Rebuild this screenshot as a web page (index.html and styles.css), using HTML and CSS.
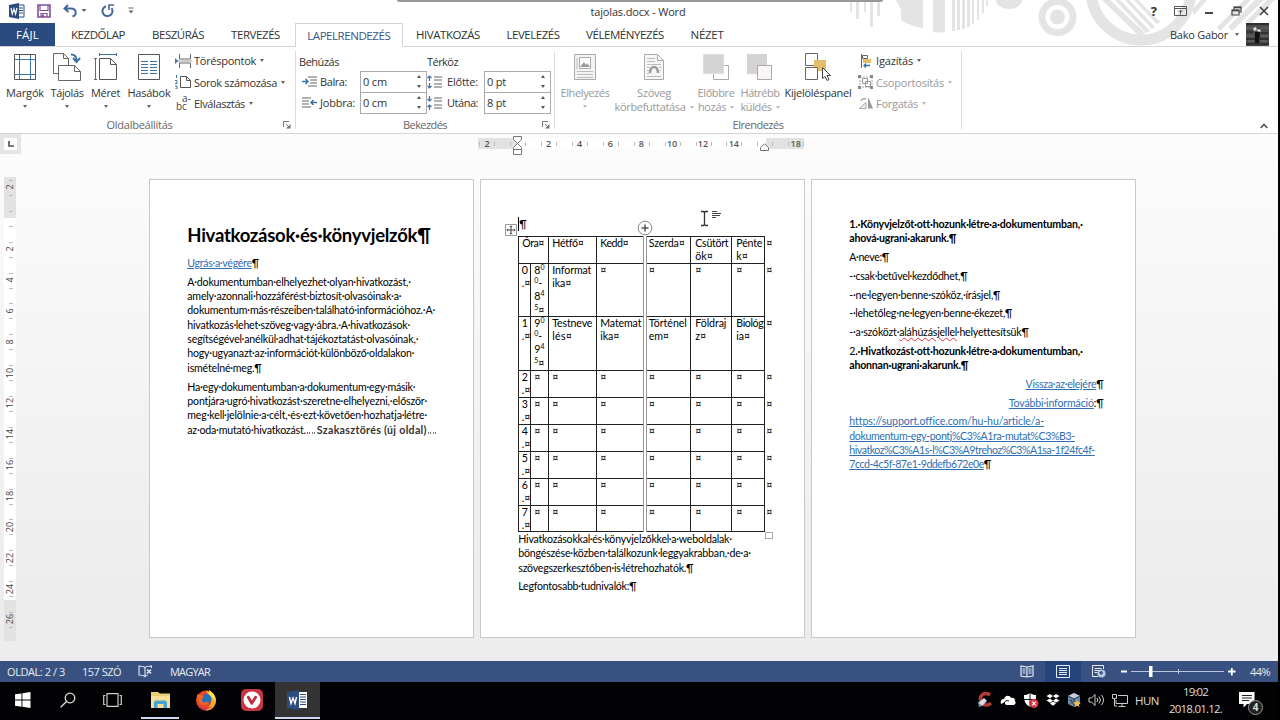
FILE: index.html
```
<!DOCTYPE html>
<html lang="hu">
<head>
    <meta charset="UTF-8">
    <meta name="viewport" content="width=device-width, initial-scale=1.0">
    <title>tajolas.docx - Word</title>
    <link rel="stylesheet" href="styles.css">
</head>
<body>
    <div class="app">
        <header class="top">
            <svg class="decor" width="438" height="46" viewBox="0 0 438 46">
                <g fill="#e4e4e4">
                    <path d="M10 2h2v10h-2zM16 2h3v17h-3zM24 2h2v10h-2zM30 2h3v25h-3zM37 2h3v14h-3z"/>
                    <path d="M56 0h5v10zM61 0h22v28q-13-2-22-8zM93 0h12v32q-6 1-12 0z"/>
                    <path d="M112 0h3v31h-3zM117 0h3v30h-3zM122 0h3v29h-3zM127 0h3v27h-3zM132 0h2v24h-2zM137 0h2v20h-2zM142 0h2v13h-2zM146 0h2v6h-2z"/>
                    <path d="M156 0h26a13 9 0 0 1-26 0z"/>
                    <circle cx="217.500" cy="17" r="7.500"/>
                    <path d="M262 0h8l35 33-6 3zM275 0h5l30 31-4 2zM285 0h4l26 27-3 2zM294 0h4l22 22-3 2z"/>
                    <path d="M377 27l27-27h7l-31 31zM388 27l27-27h9l-32 31zM406 21l21-21h8l-26 25zM352 10l9-10h6l-13 15z"/>
                </g>
                <g fill="none" stroke="#e4e4e4">
                    <circle cx="217.500" cy="17" r="15.500" stroke-width="7"/>
                    <circle cx="301" cy="-10" r="50" stroke-width="11"/>
                </g>
            </svg>
            <div class="grip"></div>
            <div class="titlebar">
                <div class="quick">
                    <svg width="16" height="16" viewBox="0 0 16 16"><path d="M9 2h6v12H9z" fill="#fff" stroke="#2b4a7d"/><path d="M10 5h4M10 7.500h4M10 10h4" stroke="#2b4a7d"/><path d="M0 2l10-2v16L0 14z" fill="#2b4a7d"/><path d="M2 5l1.300 6L5 6l1.600 5L8 5" fill="none" stroke="#fff" stroke-width="1.200"/></svg>
                    <svg width="14" height="14" viewBox="0 0 14 14"><path d="M1 1h12v12H1z" fill="none" stroke="#80509a" stroke-width="1.600"/><path d="M3 1v5.500h8V1M4 13V9.500h6V13" fill="none" stroke="#80509a" stroke-width="1.200"/><path d="M5 10.500h2V13H5z" fill="#80509a"/></svg>
                    <svg class="undo" width="24" height="14" viewBox="0 0 24 14"><path d="M5 1L1.500 4.500 5.500 8M2 4.500h6c6 0 6 7 1.500 8" fill="none" stroke="#44679c" stroke-width="2"/><path d="M18.500 5h5L21 8z" fill="#666"/></svg>
                    <svg class="redo" width="14" height="14" viewBox="0 0 14 14"><path d="M5 2.300a5 5 0 1 0 5.500 1.800" fill="none" stroke="#44679c" stroke-width="2"/><path d="M8 6V1h5" fill="none" stroke="#44679c" stroke-width="1.600"/></svg>
                    <svg class="more" width="6" height="7" viewBox="0 0 6 7"><path d="M.500 1h5" stroke="#666"/><path d="M.500 3.500h5L3 6.500z" fill="#666"/></svg>
                </div>
                <div class="doc-name"><span data-w="95">tajolas.docx - Word</span></div>
                <div class="win-buttons">
                    <b>?</b>
                    <svg width="13" height="10" viewBox="0 0 13 10"><path d="M.500.500h12v9H.500zM.500 2.500h12M6.500 8.500v-4M4.500 6l2-2 2 2" fill="none" stroke="#555"/></svg>
                    <svg width="10" height="10" viewBox="0 0 10 10"><path d="M1 7h8" stroke="#444" stroke-width="2"/></svg>
                    <svg width="11" height="10" viewBox="0 0 11 10"><path d="M1 4h7v5H1zM3 4V1h7v5H8" fill="none" stroke="#444" stroke-width="1.200"/><path d="M1 4.500h7M3 1.500h7" stroke="#444" stroke-width="1.400"/></svg>
                    <svg width="10" height="10" viewBox="0 0 10 10"><path d="M1 1l8 8M9 1L1 9" stroke="#444" stroke-width="1.700"/></svg>
                </div>
            </div>
            <nav class="tabs">
                <a class="tab file"><span data-w="23">FÁJL</span></a>
                <a class="tab"><span data-w="54">KEZDŐLAP</span></a>
                <a class="tab"><span data-w="52">BESZÚRÁS</span></a>
                <a class="tab"><span data-w="49">TERVEZÉS</span></a>
                <a class="tab active"><span data-w="83">LAPELRENDEZÉS</span></a>
                <a class="tab"><span data-w="64">HIVATKOZÁS</span></a>
                <a class="tab"><span data-w="53">LEVELEZÉS</span></a>
                <a class="tab"><span data-w="78">VÉLEMÉNYEZÉS</span></a>
                <a class="tab"><span data-w="33">NÉZET</span></a>
                <div class="user">
                    <span data-w="58">Bako Gabor</span>
                    <i class="arrow"></i>
                    <svg width="23" height="23" viewBox="0 0 23 23"><path d="M0 0h23v23H0z" fill="#4c4c4c"/><path d="M0 1h23M0 16h9M14 16h9M0 21h23M1 9h6M15 10h7" stroke="#303030" stroke-width="2"/><path d="M0 5h7M15 5h8M1 13h7M15 13h7M2 18h6M15 18h6" stroke="#696969"/><path d="M9 9h5l-1 11h-4z" fill="#111"/><path d="M7 5l3-1 1 3-3 1zM12 6l3 1-1 2-3-1z" fill="#ddd"/></svg>
                </div>
            </nav>
        </header>

        <section class="ribbon">
            <div class="group page-setup">
                <div class="group-body">
                    <div class="big">
                        <svg width="24" height="28" viewBox="0 0 24 28"><path d="M1.500 1.500h21v25h-21z" fill="#fff" stroke="#555"/><path d="M6.500 2v24M17.500 2v24M2 6.500h20M2 21.500h20" stroke="#3f73a8"/></svg>
                        <span data-w="38">Margók</span><i class="arrow"></i>
                    </div>
                    <div class="big">
                        <svg width="28" height="28" viewBox="0 0 28 28"><path d="M.500.500h10l5 5v15H.500zM10.500.500v5h5" fill="#fff" stroke="#666"/><path d="M5.500 12.500h16l6 6v9h-22zM21.500 12.500v6h6" fill="#fff" stroke="#666"/><path d="M18 1.500c4 0 5.500 2 5.500 6M20 5l3.500 4L27 5" fill="none" stroke="#3f73a8" stroke-width="2"/></svg>
                        <span data-w="33">Tájolás</span><i class="arrow"></i>
                    </div>
                    <div class="big">
                        <svg width="24" height="28" viewBox="0 0 24 28"><path d="M5.500 5.500h11l6 6v15h-17zM16.500 5.500v6h6" fill="#fff" stroke="#555"/><path d="M5 1.500h18M5.500 0v3M22.500 0v3M1.500 6v21M0 5.500h3M0 26.500h3" stroke="#3f73a8"/></svg>
                        <span data-w="29">Méret</span><i class="arrow"></i>
                    </div>
                    <div class="big">
                        <svg width="22" height="28" viewBox="0 0 22 28"><path d="M.500 1.500h21v25H.500z" fill="#fff" stroke="#555"/><path d="M3 8.500h7M12 8.500h7M3 11.500h7M12 11.500h7M3 14.500h7M12 14.500h7M3 17.500h7M12 17.500h7M3 20.500h7M12 20.500h7" stroke="#3f73a8"/></svg>
                        <span data-w="43">Hasábok</span><i class="arrow"></i>
                    </div>
                    <div class="small-list">
                        <div class="small">
                            <svg width="17" height="14" viewBox="0 0 17 14"><path d="M4.500 0v5h11V0M4.500 14V9h11v5" fill="none" stroke="#666"/><path d="M2 7h15" stroke="#999"/><path d="M0 4l3 3-3 3z" fill="#3f73a8"/></svg>
                            <span data-w="62">Töréspontok</span><i class="arrow"></i>
                        </div>
                        <div class="small">
                            <svg width="17" height="14" viewBox="0 0 17 14"><path d="M5.500 1.500h6l4 4v7h-10zM11.500 1.500v4h4" fill="#fff" stroke="#555"/><path d="M1.500 0v3M0 5.500h2v3H0M0 11h2v3H0" fill="none" stroke="#3f73a8"/></svg>
                            <span data-w="83">Sorok számozása</span><i class="arrow"></i>
                        </div>
                        <div class="small">
                            <svg class="hyphen" width="17" height="15" viewBox="0 0 17 15"><text x="1" y="14">bc<tspan x="7" y="6">a-</tspan></text></svg>
                            <span data-w="51">Elválasztás</span><i class="arrow"></i>
                        </div>
                    </div>
                </div>
                <div class="group-name"><span data-w="66">Oldalbeállítás</span></div>
                <svg class="launcher" width="8" height="8" viewBox="0 0 8 8"><path d="M.500 6V.500H6M3 3l3 3" fill="none" stroke="#777"/><path d="M7.500 3v4.500H3z" fill="#777"/></svg>
            </div>

            <div class="group paragraph">
                <div class="group-body fields">
                    <span class="head"><span data-w="40">Behúzás</span></span>
                    <span class="head"><span data-w="31">Térköz</span></span>
                    <svg width="15" height="11" viewBox="0 0 15 11"><path d="M6 1h9M8 4h7M8 7h7M6 10h9" stroke="#666" stroke-width="1.200"/><path d="M0 5.500h6M3.500 3L6 5.500 3.500 8" fill="none" stroke="#3f73a8" stroke-width="1.500"/></svg>
                    <span data-w="27">Balra:</span>
                    <div class="spin"><span data-w="24">0 cm</span><i></i></div>
                    <svg width="15" height="14" viewBox="0 0 15 14"><path d="M7 2h8M7 5h8M7 9h8M7 12h8" stroke="#666" stroke-width="1.200"/><path d="M2.500 1v5M.500 3l2-2 2 2M2.500 8v5M.500 11l2 2 2-2" fill="none" stroke="#3f73a8" stroke-width="1.200"/></svg>
                    <span data-w="31">Előtte:</span>
                    <div class="spin"><span data-w="19">0 pt</span><i></i></div>
                    <svg width="15" height="11" viewBox="0 0 15 11"><path d="M0 1h9M0 4h7M0 7h7M0 10h9" stroke="#666" stroke-width="1.200"/><path d="M15 5.500H9M11.500 3L9 5.500 11.500 8" fill="none" stroke="#3f73a8" stroke-width="1.500"/></svg>
                    <span data-w="35">Jobbra:</span>
                    <div class="spin"><span data-w="24">0 cm</span><i></i></div>
                    <svg width="15" height="14" viewBox="0 0 15 14"><path d="M7 2h8M7 5h8M7 9h8M7 12h8" stroke="#666" stroke-width="1.200"/><path d="M2.500 0v5M.500 3l2 2 2-2M2.500 14V9M.500 11l2-2 2 2" fill="none" stroke="#3f73a8" stroke-width="1.200"/></svg>
                    <span data-w="31">Utána:</span>
                    <div class="spin"><span data-w="19">8 pt</span><i></i></div>
                </div>
                <div class="group-name"><span data-w="44">Bekezdés</span></div>
                <svg class="launcher" width="8" height="8" viewBox="0 0 8 8"><path d="M.500 6V.500H6M3 3l3 3" fill="none" stroke="#777"/><path d="M7.500 3v4.500H3z" fill="#777"/></svg>
            </div>

            <div class="group arrange">
                <div class="group-body">
                    <div class="big off">
                        <svg width="22" height="28" viewBox="0 0 22 28"><path d="M.500 1.500h21v25H.500z" fill="#f3f3f3" stroke="#aaa"/><path d="M5.500 4.500h11v11h-11z" fill="#fff" stroke="#aaa"/><path d="M6 14l4-5 2 3 1-2 3 4z" fill="#999"/><path d="M3 18.500h16M3 21.500h16M3 24.500h16M3 5v11" stroke="#bbb"/></svg>
                        <span data-w="49">Elhelyezés</span><i class="arrow"></i>
                    </div>
                    <div class="big off">
                        <svg width="20" height="28" viewBox="0 0 20 28"><path d="M.500 1.500h13l6 6v19H.500zM13.500 1.500v6h6" fill="#f6f6f6" stroke="#aaa"/><path d="M3 5.500h8M3 8.500h8M3 11.500h14M3 23.500h14M3 14.500h3M3 17.500h2M3 20.500h2M15 14.500h2M16 17.500h1" stroke="#bbb"/><path d="M6 20c0-8 8-8 8 0" fill="none" stroke="#999" stroke-width="2.500"/></svg>
                        <span data-w="34">Szöveg</span><span class="second"><span data-w="71">körbefuttatása</span><i class="arrow"></i></span>
                    </div>
                    <div class="big off">
                        <svg width="26" height="28" viewBox="0 0 26 28"><path d="M10.500 12.500h15v14h-15z" fill="#fff" stroke="#aaa"/><path d="M0 1h21v20H0z" fill="#d4d4d4" stroke="#fff" stroke-width=".500"/></svg>
                        <span data-w="37">Előbbre</span><span class="second"><span data-w="28">hozás</span><i class="arrow"></i></span>
                    </div>
                    <div class="big off">
                        <svg width="26" height="28" viewBox="0 0 26 28"><path d="M0 1h20v20H0z" fill="#d4d4d4"/><path d="M10.500 12.500h14v14h-14z" fill="#f8f4f8" stroke="#aaa"/></svg>
                        <span data-w="39">Hátrébb</span><span class="second"><span data-w="31">küldés</span><i class="arrow"></i></span>
                    </div>
                    <div class="big">
                        <svg width="26" height="28" viewBox="0 0 26 28"><path d="M.500.500h12v12H.500z" fill="#fff" stroke="#666"/><path d="M9 7h12v11H9z" fill="#e3bd67"/><path d="M.500 14.500h12v12H.500z" fill="#fff" stroke="#666"/><path d="M17.500 14.500v11l2.500-2 2 4 2-1-2-4h3.500z" fill="#fff" stroke="#444"/></svg>
                        <span data-w="67">Kijelöléspanel</span>
                    </div>
                    <div class="small-list">
                        <div class="small">
                            <svg width="16" height="14" viewBox="0 0 16 14"><path d="M3.500 0v14" stroke="#666"/><path d="M4.500 1.500h5v3h-5z" fill="#fff" stroke="#666"/><path d="M5 5h8v4H5z" fill="#e3bd67"/><path d="M12 11.500H6M8 9.500l-2 2 2 2" fill="none" stroke="#3f73a8" stroke-width="1.300"/></svg>
                            <span data-w="37">Igazítás</span><i class="arrow"></i>
                        </div>
                        <div class="small off">
                            <svg width="16" height="14" viewBox="0 0 16 14"><path d="M2 2h12v10H2z" fill="none" stroke="#aaa" stroke-dasharray="2 1"/><path d="M4.500 3.500h5v5h-5zM7.500 6.500h5v5h-5z" fill="none" stroke="#999"/><path d="M0 0h3v3H0zM12 0h3v3h-3zM0 11h3v3H0zM12 11h3v3h-3z" fill="#888"/></svg>
                            <span data-w="68">Csoportosítás</span><i class="arrow"></i>
                        </div>
                        <div class="small off">
                            <svg width="16" height="12" viewBox="0 0 16 12"><path d="M1 11.500l7-6v6z" fill="#eee" stroke="#aaa"/><path d="M10 0l5 11.500h-5z" fill="#999"/><path d="M3 4c1-2 3-3 5-2" fill="none" stroke="#aaa" stroke-width="1.500"/></svg>
                            <span data-w="42">Forgatás</span><i class="arrow"></i>
                        </div>
                    </div>
                </div>
                <div class="group-name"><span data-w="51">Elrendezés</span></div>
            </div>
            <svg class="collapse" width="8" height="6" viewBox="0 0 8 6"><path d="M.700 5L4 1.500 7.300 5" fill="none" stroke="#555" stroke-width="1.700"/></svg>
        </section>

        <main class="workspace">
            <div class="ruler-row">
                <div class="tab-stop"><svg width="13" height="12" viewBox="0 0 13 12"><path d="M0 0h13v12H0z" fill="#fff"/><path d="M5 3v5h5" fill="none" stroke="#555" stroke-width="1.700"/></svg></div>
                <div class="ruler">
                    <span>2</span><span></span><span>2</span><span>4</span><span>6</span><span>8</span><span>10</span><span>12</span><span>14</span><span></span><span>18</span>
                    <svg class="indent" width="9" height="19" viewBox="0 0 9 19"><path d="M.500.500h8v3l-4 4 4 4v2h-8v-2l4-4-4-4zM.500 13.500h8v5h-8z" fill="#fff" stroke="#777"/></svg>
                    <svg class="indent right" width="9" height="8" viewBox="0 0 9 8"><path d="M4.500.700l4 4v2.800h-8V4.700z" fill="#fff" stroke="#777"/></svg>
                </div>
            </div>
            <div class="canvas">
                <div class="v-ruler">
                    <span><b>2</b></span><span></span><span><b>2</b></span><span><b>4</b></span><span><b>6</b></span><span><b>8</b></span><span><b>10</b></span><span><b>12</b></span><span><b>14</b></span><span><b>16</b></span><span><b>18</b></span><span><b>20</b></span><span><b>22</b></span><span><b>24</b></span><span><b>26</b></span>
                </div>
                <div class="pages">
                    <article class="page">
                        <h1><span data-w="243.3">Hivatkozások·és·könyvjelzők¶</span></h1>
                        <p><span data-w="71.5"><a>Ugrás·a·végére</a>¶</span></p>
                        <p>
                            <span data-w="223.5">A·dokumentumban·elhelyezhet·olyan·hivatkozást,·</span>
                            <span data-w="214">amely·azonnali·hozzáférést·biztosít·olvasóinak·a·</span>
                            <span data-w="247.7">dokumentum·más·részeiben·található·információhoz.·A·</span>
                            <span data-w="222.7">hivatkozás·lehet·szöveg·vagy·ábra.·A·hivatkozások·</span>
                            <span data-w="231">segítségével·anélkül·adhat·tájékoztatást·olvasóinak,·</span>
                            <span data-w="227">hogy·ugyanazt·az·információt·különböző·oldalakon·</span>
                            <span data-w="74.3">ismételné·meg.¶</span>
                        </p>
                        <p>
                            <span data-w="228">Ha·egy·dokumentumban·a·dokumentum·egy·másik·</span>
                            <span data-w="239.7">pontjára·ugró·hivatkozást·szeretne·elhelyezni,·először·</span>
                            <span data-w="239.7">meg·kell·jelölnie·a·célt,·és·ezt·követően·hozhatja·létre·</span>
                            <span class="break"><span data-w="118.5">az·oda·mutató·hivatkozást.</span><i></i><span class="section" data-w="110">Szakasztörés (új oldal)</span><i></i></span>
                        </p>
                    </article>

                    <article class="page second-page">
                        <p class="empty"><span>¶</span></p>
                        <div class="table-wrap">
                            <div class="grid">
                                <div class="wide"><span data-w="21.5">Óra¤</span></div><div><span data-w="31">Hétfő¤</span></div><div><span data-w="28">Kedd¤</span></div><div><span data-w="36">Szerda¤</span></div><div><span data-w="33">Csütört</span><br>ök¤</div><div><span data-w="26">Pénte</span><br>k¤</div><div class="end">¤</div>
                                <div>0<br>.¤</div><div>8<sup>0</sup><br><sup>0</sup>-<br>8<sup>4</sup><br><sup>5</sup>¤</div><div><span data-w="39">Informat</span><br><span data-w="19">ika¤</span></div><div>¤</div><div>¤</div><div>¤</div><div>¤</div><div class="end">¤</div>
                                <div>1<br>.¤</div><div>9<sup>0</sup><br><sup>0</sup>-<br>9<sup>4</sup><br><sup>5</sup>¤</div><div><span data-w="40">Testneve</span><br><span data-w="20">lés¤</span></div><div><span data-w="41">Matemat</span><br><span data-w="19">ika¤</span></div><div><span data-w="38">Történel</span><br><span data-w="20">em¤</span></div><div><span data-w="31">Földraj</span><br>z¤</div><div><span data-w="27">Biológ</span><br>ia¤</div><div class="end">¤</div>
                                <div>2<br>.¤</div><div>¤</div><div>¤</div><div>¤</div><div>¤</div><div>¤</div><div>¤</div><div class="end">¤</div>
                                <div>3<br>.¤</div><div>¤</div><div>¤</div><div>¤</div><div>¤</div><div>¤</div><div>¤</div><div class="end">¤</div>
                                <div>4<br>.¤</div><div>¤</div><div>¤</div><div>¤</div><div>¤</div><div>¤</div><div>¤</div><div class="end">¤</div>
                                <div>5<br>.¤</div><div>¤</div><div>¤</div><div>¤</div><div>¤</div><div>¤</div><div>¤</div><div class="end">¤</div>
                                <div>6<br>.¤</div><div>¤</div><div>¤</div><div>¤</div><div>¤</div><div>¤</div><div>¤</div><div class="end">¤</div>
                                <div>7<br>.¤</div><div>¤</div><div>¤</div><div>¤</div><div>¤</div><div>¤</div><div>¤</div><div class="end">¤</div>
                            </div>
                            <div class="insert-line"></div>
                            <svg class="insert-plus" width="16" height="16" viewBox="0 0 16 16"><circle cx="8" cy="8" r="6.800" fill="#fff" stroke="#888"/><path d="M8 4.500v7M4.500 8h7" stroke="#555" stroke-width="1.500"/></svg>
                            <svg class="move" width="12" height="12" viewBox="0 0 12 12"><path d="M.500.500h11v11H.500z" fill="#fff" stroke="#999"/><path d="M6 2v8M2 6h8M4.800 3L6 1.800 7.200 3M4.800 9L6 10.200 7.200 9M3 4.800L1.800 6 3 7.200M9 4.800L10.200 6 9 7.200" fill="none" stroke="#444"/></svg>
                            <div class="resize"></div>
                        </div>
                        <p>
                            <span data-w="213.5">Hivatkozásokkal·és·könyvjelzőkkel·a·weboldalak·</span>
                            <span data-w="232.5">böngészése·közben·találkozunk·leggyakrabban,·de·a·</span>
                            <span data-w="175">szövegszerkesztőben·is·létrehozhatók.¶</span>
                        </p>
                        <p><span data-w="118">Legfontosabb·tudnivalók:¶</span></p>
                        <svg class="cursor" width="20" height="18" viewBox="0 0 20 18"><path d="M1 1.500h2.500l1 1 1-1H8M4.500 2v13M1 15.500h2.500l1-1 1 1H8" fill="none" stroke="#333" stroke-width="1.300"/><path d="M12 1.500h5M12 3.500h9M12 5.500h8M12 7.500h4" stroke="#444" stroke-width="1.200"/></svg>
                    </article>

                    <article class="page third-page">
                        <p class="strong">
                            <span data-w="233">1.·Könyvjelzőt·ott·hozunk·létre·a·dokumentumban,·</span>
                            <span data-w="107">ahová·ugrani·akarunk.¶</span>
                        </p>
                        <p><span data-w="39.5">A·neve:¶</span></p>
                        <p><span data-w="118">-·csak·betűvel·kezdődhet,¶</span></p>
                        <p><span data-w="151">-·ne·legyen·benne·szóköz,·írásjel,¶</span></p>
                        <p><span data-w="163">-·lehetőleg·ne·legyen·benne·ékezet,¶</span></p>
                        <p><span data-w="179">-·a·szóközt·<u>aláhúzásjellel</u>·helyettesítsük¶</span></p>
                        <p class="strong">
                            <span data-w="233"><em>2</em>.·Hivatkozást·ott·hozunk·létre·a·dokumentumban,·</span>
                            <span data-w="119">ahonnan·ugrani·akarunk.¶</span>
                        </p>
                        <p class="right"><span data-w="78"><a>Vissza·az·elejére</a>¶</span></p>
                        <p class="right"><span data-w="94.7"><a>További·információ</a>:¶</span></p>
                        <p>
                            <span data-w="194"><a>https://support.office.com/hu-hu/article/a-</a></span>
                            <span data-w="225.5"><a>dokumentum-egy-pontj%C3%A1ra-mutat%C3%B3-</a></span>
                            <span data-w="245.5"><a>hivatkoz%C3%A1s-l%C3%A9trehoz%C3%A1sa-1f24fc4f-</a></span>
                            <span data-w="141.5"><a>7ccd-4c5f-87e1-9ddefb672e0e</a>¶</span>
                        </p>
                    </article>
                </div>
            </div>
        </main>

        <footer class="status">
            <span data-w="58">OLDAL: 2 / 3</span>
            <span data-w="39">157 SZÓ</span>
            <svg width="15" height="13" viewBox="0 0 15 13"><path d="M7 2.500C5 1 3 1 1 1v9c2 0 4 0 6 1.500zM7 2.500C8 1.500 10 1 13.500 1v2M7 11.500c1-1 2-1.500 3-1.500" fill="none" stroke="#e6ecf5" stroke-width="1.100"/><path d="M9 4.500l4 4M13 4.500l-4 4" stroke="#e6ecf5" stroke-width="1.500"/></svg>
            <span data-w="40">MAGYAR</span>
            <div class="views">
                <div class="view"><svg width="14" height="13" viewBox="0 0 14 13"><path d="M7 2L1 1v10l6 1 6-1V1zM7 2v10" fill="none" stroke="#e6ecf5" stroke-width="1.200"/><path d="M2.500 4h3M2.500 6h3M2.500 8h3M8.500 4h3M8.500 6h3M8.500 8h3" stroke="#e6ecf5"/></svg></div>
                <div class="view on"><svg width="14" height="13" viewBox="0 0 14 13"><path d="M.500.500h13v12H.500zM3 3.500h8M3 5.500h8M3 7.500h8M3 9.500h8" fill="none" stroke="#e6ecf5"/></svg></div>
                <div class="view"><svg width="14" height="13" viewBox="0 0 14 13"><path d="M6 11.500H.500V.500h11V4M2.500 3.500h7M2.500 5.500h5M2.500 7.500h3" fill="none" stroke="#e6ecf5"/><circle cx="9.500" cy="8.500" r="4" fill="#b9c7de"/><path d="M7 7l3-1 1 2-2 2z" fill="#385180"/></svg></div>
            </div>
            <svg class="zoom" width="116" height="13" viewBox="0 0 116 13"><path d="M1 6.500h6M108 6.500h7.500M111.800 3v7.500" stroke="#fff" stroke-width="1.800"/><path d="M11 6.500h93M58.500 4v5" stroke="#b9c7de"/><path d="M29 1h3.500v11H29z" fill="#fff"/></svg>
            <span class="pct" data-w="20">44%</span>
        </footer>

        <div class="taskbar">
            <div class="task"><svg width="16" height="16" viewBox="0 0 16 16"><path d="M0 2.300l6.500-.900v6.200H0zM7.400 1.200L15.500 0v7.600H7.400zM0 8.500h6.500v6.200L0 13.800zM7.400 8.500h8.100V16l-8.100-1.200z" fill="#fff"/></svg></div>
            <div class="task"><svg width="16" height="16" viewBox="0 0 16 16"><circle cx="10" cy="6" r="4.800" fill="none" stroke="#ddd" stroke-width="1.300"/><path d="M6.500 9.500L.700 15.300" stroke="#ddd" stroke-width="1.300"/></svg></div>
            <div class="task"><svg width="19" height="14" viewBox="0 0 19 14"><path d="M4 .700h11v12.600H4zM2.500 2.500H.700v9h1.800M16.500 2.500h1.800v9h-1.800" fill="none" stroke="#ccc" stroke-width="1.200"/></svg></div>
            <div class="task open"><svg width="21" height="18" viewBox="0 0 21 18"><path d="M1 1h7l2 1.500h10V17H1z" fill="#e9cf75"/><path d="M1 5h19v12H1z" fill="#f6e196"/><path d="M4 17v-6l1.500-1.500h10L17 11v6h-3.500v-4h-6v4z" fill="#47a5cf"/></svg></div>
            <div class="task"><svg width="22" height="22" viewBox="0 0 22 22"><circle cx="11" cy="11.500" r="10" fill="#e9472a"/><path d="M11 1.500c6 1 10 5 10 10s-4 10-10 10c-2-2 4-3 5-8S12 6 11 1.500z" fill="#f7a928"/><path d="M14 1c5 3 7 7 6 12-1-3-3-5-6-6z" fill="#fde04a"/><circle cx="11.500" cy="10" r="5" fill="#2372b8"/><path d="M2 5c1 1 3 1 4 1 2 0 3 1 2 3-2 1-2 3 0 4 2 1 4 0 6-1-1 4-5 5-8 3-3-2-4-6-4-10z" fill="#f0642a"/><path d="M3 16c4 4 9 4 14 1-3 4-10 6-14-1z" fill="#c42d66"/></svg></div>
            <div class="task"><svg width="22" height="22" viewBox="0 0 22 22"><rect width="22" height="22" rx="5" fill="#ca3447"/><circle cx="11" cy="11" r="8.500" fill="#fff"/><path d="M7.300 8.200l3.500 6 3.800-6" fill="none" stroke="#c02b40" stroke-width="2.800" stroke-linecap="round" stroke-linejoin="round"/></svg></div>
            <div class="task open current"><svg width="21" height="20" viewBox="0 0 21 20"><path d="M10 2h10v16H10z" fill="#fff"/><path d="M13 4.500h6M13 7h6M13 9.500h6M13 12h6M13 14.500h6" stroke="#2b4a7d"/><path d="M0 2l12-2v20L0 18z" fill="#2b4a7d"/><path d="M2.500 7l1.500 6.500L6 8l2 5.500L9.500 7" fill="none" stroke="#fff" stroke-width="1.400"/></svg></div>
            <div class="tray">
                <svg width="16" height="16" viewBox="0 0 16 16"><path d="M13 3C7-1 2 4 4 9c2 5 7 5 10 2" fill="none" stroke="#b33a30" stroke-width="3.500"/><path d="M1 11l6-5 3 3-5 5z" fill="#d5dce2"/><path d="M1 10l4 4-3 1z" fill="#6a93b8"/></svg>
                <svg width="16" height="12" viewBox="0 0 16 12"><path d="M1 10c-1-4 1-5 3-5 1-4 6-4 7-1 3-1 4 1 4 3 1 1 1 3-1 4H6c-2-1-1-4 1-4" fill="#fff"/><path d="M5 11c-2-4 2-5 4-4" fill="none" stroke="#000"/></svg>
                <svg width="16" height="15" viewBox="0 0 16 15"><path d="M7 0c2 1.500 4 2 6 2 0 6-1 9-6 12C2 11 1 8 1 2c2 0 4-.500 6-2z" fill="#fff"/><path d="M7 0v14M1 6.500h12" stroke="#111"/><circle cx="11" cy="10.500" r="4.500" fill="#d8353f"/><path d="M9.200 8.700l3.600 3.600M12.800 8.700l-3.600 3.600" stroke="#fff" stroke-width="1.200"/></svg>
                <svg width="14" height="12" viewBox="0 0 14 12"><path d="M4 0l3 2-3 2.200L.500 2zM10 0l3.500 2L10 4.200 7 2zM4 4.500L7 6.700 4 8.700.500 6.500zM10 4.500l3.500 2L10 8.700 7 6.700zM7 7.500l3 2-3 2.200-3-2.200z" fill="#fff"/></svg>
                <svg width="14" height="15" viewBox="0 0 14 15"><path d="M7 0l6 3v8l-6 3-6-3V3z" fill="#6b87a8"/><path d="M7 0l6 3-6 3-6-3z" fill="#c3cdd9"/><path d="M7 6v8M1 3l6 3 6-3M3 7l2 1v3" fill="none" stroke="#1d3550"/><path d="M10 7l1.200 2.300 2.600.300-2 1.800.600 2.600-2.400-1.300L7.600 14l.600-2.600-2-1.800 2.600-.300z" fill="#f3c43b"/></svg>
                <svg width="17" height="14" viewBox="0 0 17 14"><path d="M1 5h2.500L7 1.500v11L3.500 9H1z" fill="none" stroke="#ccc"/><path d="M9 5q1.500 2 0 4M11 3.500q3 3.500 0 7M13.500 2q4 5 0 10" fill="none" stroke="#ccc"/></svg>
                <svg width="16" height="13" viewBox="0 0 16 13"><path d="M6 1.500h9.500v8H4V6M10 9.500V12M6.500 12.500h7M.500.500h4v4h-4zM2.500 5v7H5" fill="none" stroke="#ccc"/></svg>
                <span class="lang"><span data-w="24">HUN</span></span>
                <div class="clock"><span data-w="25">19:02</span><span data-w="53">2018.01.12.</span></div>
                <div class="notes">
                    <svg width="16" height="16" viewBox="0 0 16 16"><path d="M0 0h15.500v12H8l-3.500 3.500V12H0z" fill="#fff"/><path d="M3 3.500h10M3 6h10M3 8.500h7" stroke="#222"/></svg>
                    <b>4</b>
                </div>
            </div>
        </div>
    </div>
    <script src="fit.js"></script>
</body>
</html>
```
FILE: styles.css
```
* {
    box-sizing: border-box;
}

body {
    margin: 0;
    background-color: #000;
    font-family: "Open Sans", "Noto Sans", sans-serif;
    font-size: 11px;
    color: #333;
}

.app {
    display: flex;
    flex-direction: column;
    width: 1278px;
    height: 720px;
    overflow: hidden;
    background-color: #fff;
}

svg {
    display: block;
    flex: none;
}

[data-w] {
    display: inline-block;
    white-space: nowrap;
}

/* title bar and tabs */
.top {
    position: relative;
    height: 47px;
    flex: none;
}

.decor {
    position: absolute;
    right: 0;
    top: 0;
}

.grip {
    position: absolute;
    left: 397px;
    top: 0;
    width: 486px;
    height: 2px;
    background-color: #999;
    border-radius: 0 0 6px 6px;
}

.titlebar {
    position: relative;
    display: grid;
    grid-template-columns: 400px 476px 402px;
    height: 23px;
}

.quick {
    display: flex;
    align-items: center;
    height: 21px;
    padding-left: 9px;
    gap: 12px;
}

.redo {
    margin-left: 2px;
}

.more {
    margin-left: 1px;
}

.doc-name {
    text-align: center;
    line-height: 24px;
}

.win-buttons {
    display: flex;
    justify-content: flex-end;
    align-items: center;
    height: 21px;
    gap: 17px;
    padding-right: 9px;
    font-size: 13px;
}

.tabs {
    position: relative;
    display: grid;
    grid-template-columns: 57.5px 81px 79px 76px 109px 91px 79px 105px 59px 1fr;
    height: 24px;
    border-bottom: 1px solid #d5d5d5;
}

.tab {
    display: flex;
    justify-content: center;
    align-items: center;
    height: 23px;
    font-size: 11.5px;
}

.file {
    width: 55px;
    background-color: #2a4b80;
    color: #fff;
}

.active {
    height: 24px;
    margin: 0 0 0 1.5px;
    border: 1px solid #d5d5d5;
    border-bottom: none;
    background-color: #fff;
    color: #3a5589;
}

.user {
    display: flex;
    justify-content: flex-end;
    align-items: center;
    height: 23px;
    gap: 7px;
    padding-right: 9px;
}

.arrow {
    display: inline-block;
    flex: none;
    border: 2.5px solid transparent;
    border-top: 3px solid #666;
    border-bottom: none;
}

/* ribbon */
.ribbon {
    position: relative;
    display: flex;
    flex: none;
    height: 87px;
    padding-top: 4px;
    border-bottom: 1px solid #d5d5d5;
}

.group {
    position: relative;
    height: 78px;
    border-right: 1px solid #dcdcdc;
}

.page-setup {
    width: 296px;
}

.paragraph {
    width: 259px;
}

.arrange {
    width: 407px;
}

.group-body {
    display: flex;
    height: 66px;
}

.page-setup .group-body {
    padding-left: 4px;
}

.big {
    display: flex;
    flex-direction: column;
    align-items: center;
    width: 42px;
    padding-top: 2px;
    line-height: 14px;
}

.big svg {
    margin-bottom: 5px;
}

.big > .arrow {
    margin-top: 5px;
}

.big:nth-child(3) {
    width: 35px;
}

.big:nth-child(4) {
    width: 52px;
}

.arrange .big {
    width: 60px;
}

.arrange .big:nth-child(2) {
    width: 78px;
}

.arrange .big:nth-child(3) {
    width: 46px;
}

.arrange .big:nth-child(4) {
    width: 42px;
}

.arrange .big:nth-child(5) {
    width: 74px;
}

.second {
    display: flex;
    align-items: center;
    gap: 4px;
}

.off {
    color: #999;
}

.off .arrow {
    border-top-color: #bbb;
}

.small-list {
    margin-top: -1px;
}

.arrange .small-list {
    padding-left: 3px;
}

.small {
    display: flex;
    align-items: center;
    height: 21.4px;
}

.small svg {
    margin-right: 2px;
}

.small .arrow {
    margin-left: 4px;
}

.hyphen {
    overflow: visible;
    font-size: 10px;
    fill: #444;
}

.group-name {
    height: 14px;
    line-height: 16px;
    text-align: center;
    color: #666;
}

.page-setup .group-name {
    padding-right: 16px;
}

.launcher {
    position: absolute;
    right: 4px;
    bottom: 0;
}

.fields {
    display: grid;
    grid-template-columns: 18px 40px 67px 20px 37px 67px;
    grid-template-rows: 20px 21px 21px;
    align-items: center;
    justify-items: start;
    padding-left: 6px;
}

.head:first-child {
    grid-column: 1 / 4;
    margin-left: -3px;
}

.head {
    grid-column: 4 / 7;
    margin-left: 0;
}

.fields .spin {
    justify-self: stretch;
}

.spin {
    display: flex;
    justify-content: space-between;
    align-items: center;
    height: 22px;
    padding: 0 4px 0 2px;
    border: 1px solid #ababab;
}

.spin i {
    width: 5px;
    height: 13px;
}

.spin i::before,
.spin i::after {
    content: "";
    display: block;
    width: 0;
    margin-bottom: 7px;
    border: 2.5px solid transparent;
    border-top: none;
    border-bottom: 3px solid #555;
}

.spin i::after {
    border-bottom: none;
    border-top: 3px solid #555;
}

.collapse {
    position: absolute;
    right: 10px;
    bottom: 4px;
}

/* workspace */
.workspace {
    flex: 1;
    background: linear-gradient(#fcfcfc, #ededed 85%);
}

.ruler-row {
    display: flex;
    height: 43px;
}

.tab-stop {
    width: 21px;
    height: 20px;
    padding: 4px;
    background-color: #e5e5e5;
}

.ruler {
    position: relative;
    display: flex;
    width: 326px;
    height: 11px;
    margin: 4px 0 0 457px;
    line-height: 11px;
    font-size: 9px;
    font-weight: 600;
    color: #555;
    background: linear-gradient(to right, #e2e2e2 39px, #fff 39px, #fff 288px, #e2e2e2 288px);
}

.ruler span {
    width: 30.87px;
    flex: none;
    text-align: center;
    background: linear-gradient(#bbb, #bbb) 8px 4px / 1px 4px no-repeat, linear-gradient(#bbb, #bbb) 23px 4px / 1px 4px no-repeat;
}

.ruler span:first-child {
    width: 24.4px;
    padding-right: 6.4px;
    background-position: 1px 4px, 16px 4px;
}

.ruler span:nth-child(11) {
    width: 23.7px;
    padding-left: 7.4px;
}

.indent {
    position: absolute;
    left: 35px;
    top: -2px;
}

.indent.right {
    left: 282px;
    top: 5px;
}

.canvas {
    display: flex;
    padding-left: 4px;
}

.v-ruler {
    width: 12px;
    height: 464px;
    overflow: hidden;
    line-height: 12px;
    font-size: 9px;
    color: #444;
    background: linear-gradient(#e2e2e2 41px, #fff 41px, #fff 423px, #e2e2e2 423px);
}

.v-ruler span {
    display: flex;
    justify-content: center;
    align-items: center;
    height: 30.87px;
    background: linear-gradient(#bbb, #bbb) 5px 8px / 4px 1px no-repeat, linear-gradient(#bbb, #bbb) 5px 23px / 4px 1px no-repeat;
}

.v-ruler span:first-child {
    height: 25.8px;
    padding-bottom: 5px;
    background-position: 5px 3px, 5px 18px;
}

.v-ruler b {
    font-weight: 500;
    transform: rotate(-90deg);
}

.pages {
    display: flex;
    gap: 6px;
    padding: 2px 0 0 133px;
}

.page {
    position: relative;
    width: 325px;
    height: 459px;
    padding: 43px 0 0 37.3px;
    border: 1px solid #c8c8c8;
    background-color: #fff;
    font-family: Lato, "Open Sans", sans-serif;
    font-size: 10.6px;
    line-height: 14.35px;
    color: #000;
}

.page h1 {
    margin: 0 0 9px;
    font-size: 18.5px;
    line-height: 24px;
}

.page p {
    margin: 0 0 4.4px;
}

.page p > span {
    display: block;
    width: max-content;
}

.page a {
    color: #2f6eb0;
    text-decoration: underline;
}

.page .break {
    display: flex;
    align-items: center;
    gap: 1px;
}

.break i {
    width: 9px;
    height: 2px;
    margin-top: 6px;
    background: repeating-linear-gradient(to right, #777 0 1px, transparent 1px 2.3px);
}

.section {
    font-weight: bold;
    color: #333;
}

.page .empty {
    margin: 0;
    height: 19px;
}

.empty span {
    border-left: 1px solid #000;
}

.second-page {
    padding-top: 37px;
}

.table-wrap {
    position: relative;
    width: 258px;
}

.grid {
    display: grid;
    grid-template-columns: 12px 18px 48px 49px 45px 41px 33px 11px;
    grid-template-rows: 28px 53px 54px 27px 27px 27px 27px 27px 26px;
    border-left: 1px solid #222;
    line-height: 13.2px;
}

.grid div {
    padding-left: 3px;
    border-right: 1px solid #222;
    border-bottom: 1px solid #222;
    white-space: nowrap;
    overflow: hidden;
}

.grid div:nth-child(-n+7) {
    padding-top: 1px;
}

.grid div:nth-child(-n+6) {
    box-shadow: inset 0 1px #222;
}

.grid .wide {
    grid-column: 1 / 3;
}

/* the wide header cell shifts the count by one */
.grid div:nth-child(8n+5),
.grid div:nth-child(8n+6) {
    padding-left: 4px;
}

.grid div:nth-child(8n+4),
.grid div:nth-child(8n) {
    padding-left: 2.5px;
}

.grid .end {
    padding-left: 1px;
    border: none;
}

.grid sup {
    font-size: 7px;
    line-height: 0;
    vertical-align: 4px;
}

.insert-line {
    position: absolute;
    left: 125px;
    top: 0;
    width: 4px;
    height: 296px;
    border: 1px solid #999;
    border-width: 0 1px;
    background-color: #fff;
}

.insert-plus {
    position: absolute;
    left: 119px;
    top: -16px;
}

.move {
    position: absolute;
    left: -13px;
    top: -12px;
}

.resize {
    position: absolute;
    left: 247px;
    top: 296px;
    width: 8px;
    height: 7px;
    border: 1px solid #aaa;
    background-color: #fff;
}

.cursor {
    position: absolute;
    left: 219px;
    top: 30px;
    overflow: visible;
}

.third-page {
    padding-top: 37px;
}

.strong {
    font-weight: bold;
}

.strong em {
    font-style: normal;
    font-weight: normal;
}

.page u {
    text-decoration: underline wavy #d33 1px;
    text-underline-offset: 1px;
}

.page .right span {
    margin-left: auto;
    margin-right: 31.5px;
}

/* status bar */
.status {
    display: flex;
    align-items: center;
    flex: none;
    height: 21px;
    padding: 0 8px 0 7px;
    background-color: #385180;
    color: #e6ecf5;
}

.status > span,
.status > svg {
    margin-right: 17px;
}

.views {
    display: flex;
    height: 21px;
    margin-left: auto;
}

.view {
    display: flex;
    justify-content: center;
    align-items: center;
    width: 36px;
}

.view.on {
    background-color: #24457c;
}

.status > .zoom {
    margin: 0 14px 0 3px;
}

.status > .pct {
    margin-right: 0;
}

/* windows taskbar */
.taskbar {
    display: flex;
    flex: none;
    height: 38px;
    background-color: #020204;
    color: #ddd;
}

.task {
    display: flex;
    justify-content: center;
    align-items: center;
    width: 45px;
    height: 37px;
    border-bottom: 2px solid transparent;
}

.task.open {
    border-bottom-color: #c9dcf2;
}

.task:nth-child(n+5) {
    width: 46px;
}

.task:nth-child(4) {
    width: 38px;
    margin: 0 4px 0 6px;
}

.task.current {
    width: 45px;
    background-color: #333;
}

.tray {
    display: flex;
    align-items: center;
    gap: 7px;
    height: 36px;
    margin-left: auto;
    padding-right: 15px;
    font-size: 11.5px;
}

.clock {
    display: flex;
    flex-direction: column;
    align-items: center;
    margin-left: 3px;
    line-height: 17px;
}

.notes {
    display: flex;
    align-items: center;
    margin-left: 10px;
}

.notes b {
    width: 15px;
    height: 15px;
    margin: 14px 0 0 -7px;
    border: 1px solid #999;
    border-radius: 50%;
    background-color: #222;
    line-height: 13px;
    text-align: center;
    font-size: 10px;
}
```
FILE: fit.js
```
// spread the letters of a label so that it takes up the width in data-w
document.querySelectorAll('[data-w]').forEach((el) => {
    const width = parseFloat(el.dataset.w);
    const natural = el.getBoundingClientRect().width;
    el.style.letterSpacing = (width - natural) / el.textContent.length + 'px';
});
```
